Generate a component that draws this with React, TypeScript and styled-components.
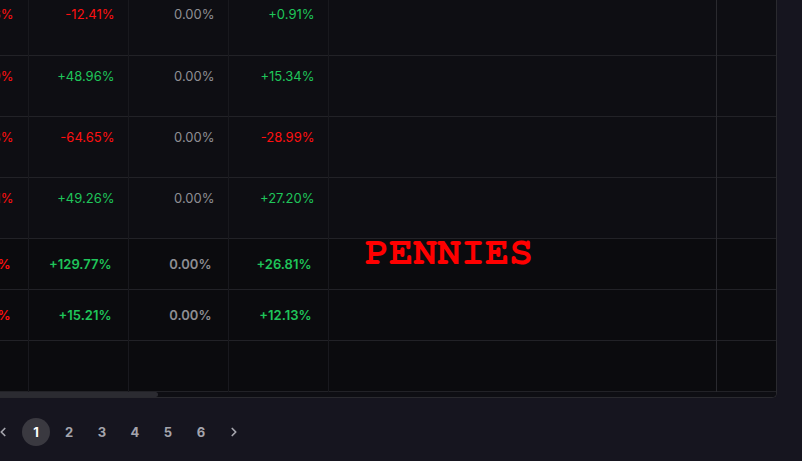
import React from "react";
import styled, { createGlobalStyle } from "styled-components";
import { ChevronLeft, ChevronRight } from "lucide-react";

const GlobalStyle = createGlobalStyle`
  html, body {
    margin: 0;
    padding: 0;
    background: #16151f;
    overflow: hidden;
  }
  body {
    font-family: Inter, "Noto Sans", sans-serif;
  }
`;

const Page = styled.div`
  width: 802px;
  height: 461px;
  overflow: hidden;
`;

const TableCard = styled.div`
  position: relative;
  margin: -6px 0 0 -72px;
  width: 848px;
  background: #0e0e13;
  border-right: 1px solid #2a2a2f;
  border-bottom: 1px solid #2a2a2f;
  border-bottom-right-radius: 5px;
  overflow: hidden;
`;

const Table = styled.table`
  width: 848px;
  table-layout: fixed;
  border-collapse: collapse;
`;

const Col = styled.col<{ $w: number }>`
  width: ${(p) => p.$w}px;
`;

const Row = styled.tr<{ $summary?: boolean }>`
  height: ${(p) => (p.$summary ? 51 : 61)}px;
  background: ${(p) => (p.$summary ? "#0b0b0e" : "#0e0e13")};
  border-bottom: 1px solid #222227;
`;

type Tone = "up" | "down" | "flat";

const toneColor: Record<Tone, string> = {
  up: "#1fc55a",
  down: "#ff1010",
  flat: "#8e8e94",
};

const Cell = styled.td<{ $tone?: Tone; $summary?: boolean; $strong?: boolean; $first?: boolean }>`
  padding: ${(p) =>
    p.$summary ? `0 ${p.$first ? 17 : 16}px 0 0` : `12px ${p.$first ? 14 : 13}px 0 0`};
  vertical-align: ${(p) => (p.$summary ? "middle" : "top")};
  text-align: right;
  font-size: 13px;
  line-height: 16px;
  font-weight: ${(p) => (p.$summary ? 600 : 400)};
  color: ${(p) => toneColor[p.$tone || "flat"]};
  border-right: 1px solid ${(p) => (p.$strong ? "#2a2a2f" : "#19191e")};
  white-space: nowrap;
  overflow: hidden;
`;

const ScrollTrack = styled.div`
  height: 5px;
  background: #0e0e13;
  display: flex;
`;

const ScrollThumb = styled.div`
  width: 230px;
  height: 100%;
  background: #2b2b31;
  border-radius: 0 3px 3px 0;
`;

const Watermark = styled.div`
  position: absolute;
  left: 437px;
  top: 238px;
  font-family: "Nimbus Mono PS", "Nimbus Mono L", FreeMono, "Courier 10 Pitch", "Courier New", Courier, "Liberation Mono", monospace;
  font-weight: 700;
  font-size: 40px;
  line-height: 40px;
  color: #ff0000;
  pointer-events: none;
`;

const Pager = styled.nav`
  display: flex;
  align-items: center;
  gap: 5px;
  margin: 20px 0 0 -11px;
`;

const PageButton = styled.button<{ $active?: boolean }>`
  width: 28px;
  height: 28px;
  border-radius: 50%;
  border: none;
  padding: 0;
  display: flex;
  align-items: center;
  justify-content: center;
  background: ${(p) => (p.$active ? "#3a3940" : "transparent")};
  color: ${(p) => (p.$active ? "#ffffff" : "#a4a4ac")};
  font-family: Inter, "Noto Sans", sans-serif;
  font-weight: 700;
  font-size: 13px;
  cursor: pointer;
`;

type RowData = { cells: [string, Tone][]; summary?: boolean };

const rows: RowData[] = [
  { cells: [["-21.36%", "down"], ["-12.41%", "down"], ["0.00%", "flat"], ["+0.91%", "up"]] },
  { cells: [["-17.09%", "down"], ["+48.96%", "up"], ["0.00%", "flat"], ["+15.34%", "up"]] },
  { cells: [["-40.38%", "down"], ["-64.65%", "down"], ["0.00%", "flat"], ["-28.99%", "down"]] },
  { cells: [["-12.51%", "down"], ["+49.26%", "up"], ["0.00%", "flat"], ["+27.20%", "up"]] },
  { cells: [["-30.44%", "down"], ["+129.77%", "up"], ["0.00%", "flat"], ["+26.81%", "up"]], summary: true },
  { cells: [["-18.72%", "down"], ["+15.21%", "up"], ["0.00%", "flat"], ["+12.13%", "up"]], summary: true },
  { cells: [["", "flat"], ["", "flat"], ["", "flat"], ["", "flat"]], summary: true },
];

export default function App() {
  return (
    <Page>
      <GlobalStyle />
      <TableCard>
        <Table>
          <colgroup>
            <Col $w={100} />
            <Col $w={100} />
            <Col $w={100} />
            <Col $w={100} />
            <Col $w={388} />
            <Col $w={60} />
          </colgroup>
          <tbody>
            {rows.map((r, i) => (
              <Row key={i} $summary={r.summary}>
                {r.cells.map(([v, t], j) => (
                  <Cell key={j} $tone={t} $summary={r.summary} $first={j === 0}>
                    {v}
                  </Cell>
                ))}
                <Cell $summary={r.summary} $strong />
                <Cell $summary={r.summary} />
              </Row>
            ))}
          </tbody>
        </Table>
        <ScrollTrack>
          <ScrollThumb />
        </ScrollTrack>
        <Watermark>PENNIES</Watermark>
      </TableCard>
      <Pager>
        <PageButton aria-label="Previous">
          <ChevronLeft size={14} strokeWidth={3} />
        </PageButton>
        {[1, 2, 3, 4, 5, 6].map((n) => (
          <PageButton key={n} $active={n === 1}>
            {n}
          </PageButton>
        ))}
        <PageButton aria-label="Next">
          <ChevronRight size={14} strokeWidth={3} />
        </PageButton>
      </Pager>
    </Page>
  );
}
